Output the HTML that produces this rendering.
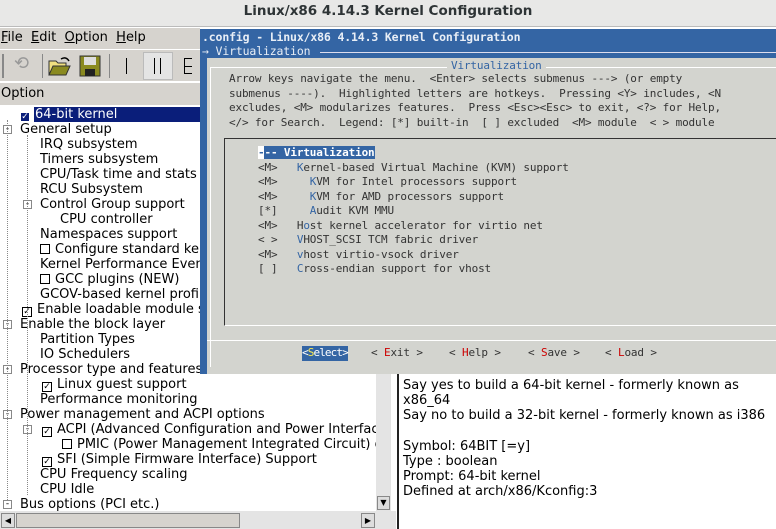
<!DOCTYPE html>
<html><head><meta charset="utf-8"><style>
*{margin:0;padding:0;box-sizing:border-box}
body{width:776px;height:529px;overflow:hidden;background:#fff;position:relative;font-family:"DejaVu Sans","Liberation Sans",sans-serif;font-size:13px;color:#000}
.a{position:absolute;white-space:pre}
.t{font-family:"DejaVu Sans Mono","Liberation Mono",monospace;font-size:11px;letter-spacing:-0.15px;color:#333;line-height:14.5px}
.b{color:#3465a4}
.r{color:#c00}
.tree div{height:15px;line-height:15px;position:absolute;white-space:pre}
.cb{display:inline-block;width:10px;height:10px;border:1px solid #000;vertical-align:-1px;margin-right:5px;font-size:9px;line-height:8px;text-align:center}
.ex{position:absolute;width:9px;height:9px;border:1px solid #888;background:#fff;font-size:9px;line-height:6px;text-align:center;color:#000}
</style></head><body>
<div class="a" style="left:0;top:0;width:776px;height:27px;background:#e8e8e7;border-bottom:1px solid #bbb"></div>
<div class="a" style="left:0;top:3px;width:776px;text-align:center;font-weight:bold;font-size:13.5px;color:#2e3436">Linux/x86 4.14.3 Kernel Configuration</div>
<div class="a" style="left:0;top:28px;width:200px;height:53px;background:#d6d3ce"></div>
<div class="a" style="left:1px;top:30px;font-size:13px"><u>F</u>ile  <u>E</u>dit  <u>O</u>ption  <u>H</u>elp</div>
<div class="a" style="left:0;top:49px;width:200px;height:1px;background:#fff"></div>
<div class="a" style="left:2px;top:54px;width:2px;height:24px;background:#888"></div>
<div class="a" style="left:14px;top:53px;font-size:18px;color:#999">⟲</div>
<div class="a" style="left:42px;top:54px;width:1px;height:24px;background:#888"></div>
<svg class="a" style="left:47px;top:55px" width="24" height="22"><path d="M2 6h7l2 2h8v4H6L2 20z" fill="#f0e080" stroke="#333"/><path d="M2 20l4-9h17l-4 9z" fill="#8a8a20" stroke="#333"/><path d="M14 4q5-3 8 2" fill="none" stroke="#000" stroke-width="1.5"/></svg>
<svg class="a" style="left:79px;top:55px" width="22" height="22"><rect x="1" y="1" width="20" height="20" fill="#8a8a20" stroke="#333"/><rect x="5" y="2" width="12" height="8" fill="#ddd"/><rect x="6" y="14" width="10" height="7" fill="#222"/></svg>
<div class="a" style="left:109px;top:54px;width:1px;height:24px;background:#888"></div>
<div class="a" style="left:126px;top:58px;width:1px;height:16px;background:#000"></div>
<div class="a" style="left:143px;top:52px;width:30px;height:28px;background:#e4e4e4;border:1px solid #bbb"></div>
<div class="a" style="left:154px;top:58px;width:1px;height:16px;background:#000"></div>
<div class="a" style="left:160px;top:58px;width:1px;height:16px;background:#000"></div>
<div class="a" style="left:184px;top:58px;width:1px;height:16px;background:#000"></div>
<div class="a" style="left:184px;top:58px;width:8px;height:1px;background:#000"></div>
<div class="a" style="left:184px;top:66px;width:8px;height:1px;background:#000"></div>
<div class="a" style="left:184px;top:73px;width:8px;height:1px;background:#000"></div>
<div class="a" style="left:0;top:82px;width:200px;height:23px;background:#d6d3ce;border-top:1px solid #fff"></div>
<div class="a" style="left:1px;top:86px">Option</div>
<div class="a" style="left:0;top:105px;width:376px;height:406px;background:#fff"></div>
<div class="a" style="left:34px;top:107px;width:166px;height:15px;background:#0a1e7a"></div>
<div class="tree" style="position:absolute;left:0;top:107px">
<div style="left:20px;top:0;color:#fff"><span class="cb" style="border-color:#fff;background:#0a1e7a;color:#fff">✓</span>64-bit kernel</div>
<div style="left:20px;top:15px">General setup</div>
<div style="left:40px;top:30px">IRQ subsystem</div>
<div style="left:40px;top:45px">Timers subsystem</div>
<div style="left:40px;top:60px">CPU/Task time and stats a</div>
<div style="left:40px;top:75px">RCU Subsystem</div>
<div style="left:40px;top:90px">Control Group support</div>
<div style="left:60px;top:105px">CPU controller</div>
<div style="left:40px;top:120px">Namespaces support</div>
<div style="left:40px;top:135px"><span class="cb"></span>Configure standard ker</div>
<div style="left:40px;top:150px">Kernel Performance Event</div>
<div style="left:40px;top:165px"><span class="cb"></span>GCC plugins (NEW)</div>
<div style="left:40px;top:180px">GCOV-based kernel profili</div>
<div style="left:22px;top:195px"><span class="cb">✓</span>Enable loadable module s</div>
<div style="left:20px;top:210px">Enable the block layer</div>
<div style="left:40px;top:225px">Partition Types</div>
<div style="left:40px;top:240px">IO Schedulers</div>
<div style="left:20px;top:255px">Processor type and features</div>
<div style="left:42px;top:270px"><span class="cb">✓</span>Linux guest support</div>
<div style="left:40px;top:285px">Performance monitoring</div>
<div style="left:20px;top:300px">Power management and ACPI options</div>
<div style="left:42px;top:315px"><span class="cb">✓</span>ACPI (Advanced Configuration and Power Interface</div>
<div style="left:62px;top:330px"><span class="cb"></span>PMIC (Power Management Integrated Circuit) o</div>
<div style="left:42px;top:345px"><span class="cb">✓</span>SFI (Simple Firmware Interface) Support</div>
<div style="left:40px;top:360px">CPU Frequency scaling</div>
<div style="left:40px;top:375px">CPU Idle</div>
<div style="left:20px;top:390px">Bus options (PCI etc.)</div>
</div>
<div class="ex" style="left:3px;top:125px">-</div>
<div class="ex" style="left:23px;top:200px">-</div>
<div class="ex" style="left:3px;top:320px">-</div>
<div class="ex" style="left:3px;top:365px">-</div>
<div class="ex" style="left:3px;top:410px">-</div>
<div class="ex" style="left:23px;top:425px">-</div>
<div class="ex" style="left:3px;top:500px">-</div>
<div class="a" style="left:7px;top:120px;width:1px;height:380px;border-left:1px dotted #888"></div>
<div class="a" style="left:27px;top:135px;width:1px;height:360px;border-left:1px dotted #888"></div>
<div class="a" style="left:376px;top:373px;width:15px;height:138px;background:#e4e4e4"></div>
<div class="a" style="left:377px;top:496px;width:13px;height:14px;background:#ddd;border:1px solid #888;font-size:8px;text-align:center;line-height:12px">▼</div>
<div class="a" style="left:0;top:511px;width:396px;height:18px;background:#e4e4e4"></div>
<div class="a" style="left:1px;top:513px;width:14px;height:15px;background:#ddd;border:1px solid #888;font-size:8px;text-align:center;line-height:13px">◀</div>
<div class="a" style="left:16px;top:513px;width:224px;height:15px;background:#d6d3ce;border:1px solid #888"></div>
<div class="a" style="left:361px;top:513px;width:14px;height:15px;background:#ddd;border:1px solid #888;font-size:8px;text-align:center;line-height:13px">▶</div>
<div class="a" style="left:397px;top:373px;width:2px;height:156px;background:#222"></div>
<div class="a" style="left:403px;top:378px;font-size:13px;line-height:15.2px;white-space:pre">Say yes to build a 64-bit kernel - formerly known as
x86_64
Say no to build a 32-bit kernel - formerly known as i386

Symbol: 64BIT [=y]
Type : boolean
Prompt: 64-bit kernel
Defined at arch/x86/Kconfig:3</div>
<div class="a" style="left:200px;top:29px;width:576px;height:345px;background:#3465a4"></div>
<div class="a t" style="left:202px;top:30px;color:#e8eef6;font-weight:bold;font-size:11.5px">.config - Linux/x86 4.14.3 Kernel Configuration</div>
<div class="a t" style="left:202px;top:44px;color:#e8eef6;font-size:11.5px">→ Virtualization</div>
<div class="a" style="left:320px;top:52px;width:456px;height:1px;background:#dde"></div>
<div class="a" style="left:207px;top:58px;width:569px;height:316px;background:#d3d4cf"></div>
<div class="a" style="left:210px;top:67px;width:566px;height:1px;background:#fff"></div>
<div class="a" style="left:210px;top:67px;width:1px;height:300px;background:#fff"></div>
<div class="a t" style="left:447px;top:59px;background:#d3d4cf;padding:0 4px"><span class="b">Virtualization</span></div>
<div class="a t" style="left:229px;top:72px">Arrow keys navigate the menu.  &lt;Enter&gt; selects submenus ---&gt; (or empty
submenus ----).  Highlighted letters are hotkeys.  Pressing &lt;Y&gt; includes, &lt;N
excludes, &lt;M&gt; modularizes features.  Press &lt;Esc&gt;&lt;Esc&gt; to exit, &lt;?&gt; for Help,
&lt;/&gt; for Search.  Legend: [*] built-in  [ ] excluded  &lt;M&gt; module  &lt; &gt; module</div>
<div class="a" style="left:224px;top:138px;width:552px;height:188px;border-left:1px solid #333;border-top:1px solid #333;border-bottom:1px solid #fff"></div>
<div class="a" style="left:207px;top:340px;width:569px;height:1px;background:#fff"></div>
<div class="a t" style="left:258px;top:146px"><span style="background:#3465a4;color:#fff;font-weight:bold"><span style="background:#fff;color:#3465a4">-</span>-- Virtualization</span>
&lt;M&gt;   <span class="b">K</span>ernel-based Virtual Machine (KVM) support
&lt;M&gt;     <span class="b">K</span>VM for Intel processors support
&lt;M&gt;     <span class="b">K</span>VM for AMD processors support
[*]     <span class="b">A</span>udit KVM MMU
&lt;M&gt;   H<span class="b">o</span>st kernel accelerator for virtio net
&lt; &gt;   <span class="b">V</span>HOST_SCSI TCM fabric driver
&lt;M&gt;   <span class="b">v</span>host virtio-vsock driver
[ ]   <span class="b">C</span>ross-endian support for vhost</div>
<div class="a t" style="left:302px;top:346px;background:#3465a4;color:#fff;letter-spacing:-0.9px">&lt;<span style="color:#fce94f">S</span>elect&gt;</div>
<div class="a t" style="left:371px;top:346px">&lt; <span class="r">E</span>xit &gt;</div>
<div class="a t" style="left:449px;top:346px">&lt; <span class="r">H</span>elp &gt;</div>
<div class="a t" style="left:528px;top:346px">&lt; <span class="r">S</span>ave &gt;</div>
<div class="a t" style="left:605px;top:346px">&lt; <span class="r">L</span>oad &gt;</div>
</body></html>
